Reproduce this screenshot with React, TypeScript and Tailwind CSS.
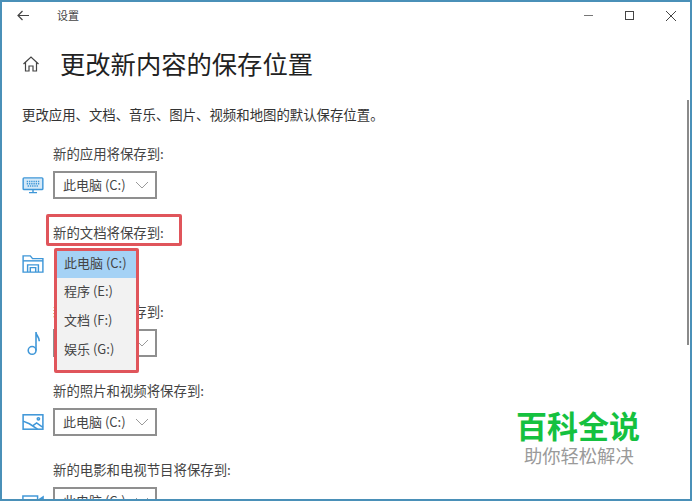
const font = { fontFamily: '"Noto Sans CJK SC", sans-serif' };

function Chevron() {
  return (
    <svg width="14" height="8" viewBox="0 0 14 8" fill="none" stroke="#9a9a9a" strokeWidth="1">
      <path d="M1 1l6 6 6-6" />
    </svg>
  );
}

function Select({ hidden }: { hidden?: boolean }) {
  if (hidden) return <div className="h-[28px] w-[104px]" />;
  return (
    <div className="flex h-[28px] w-[104px] items-center border-2 border-[#8f8f8f] bg-white pl-[8px] text-[13px] text-[#444]">
      <span className="w-[72px] whitespace-nowrap">此电脑 (C:)</span>
      <Chevron />
    </div>
  );
}

function Row({ label, icon, hidden }: { label: string; icon: React.ReactNode; hidden?: boolean }) {
  return (
    <div className="h-[79px]">
      <div className="ml-[51px] h-[26px] whitespace-nowrap text-[13.4px] leading-[24px] text-[#444]">{label}</div>
      <div className="mt-[4px] flex items-center">
        <div className="flex w-[51px] justify-center pl-[11px]">{icon}</div>
        <Select hidden={hidden} />
      </div>
    </div>
  );
}

const blue = '#3f97d8';

const Keyboard = (
  <svg width="22" height="17" viewBox="0 0 24 19" fill="none" stroke={blue} strokeWidth="1.6">
    <rect x="1" y="1" width="22" height="13" rx="1" fill="#d5e9f8" />
    <path d="M5 5h14M5 7.500h14M6 10h12" strokeDasharray="1.500 1" />
    <path d="M12 14v3.500M7.500 17.500h9" />
  </svg>
);
const Folder = (
  <svg width="22" height="18" viewBox="0 0 24 20" fill="none" stroke={blue} strokeWidth="1.6">
    <path d="M1 19V1h8l2.500 3H23v15z" />
    <path d="M1 6.500h22" />
    <path d="M6 19v-8h12v8M9 19v-5h6v5" />
  </svg>
);
const Note = (
  <svg width="13" height="25" viewBox="0 0 14 27" fill="none" stroke={blue} strokeWidth="1.7">
    <circle cx="5.500" cy="21" r="4.200" />
    <path d="M9.700 21V1c0 4 3.500 5 3.500 10" />
  </svg>
);
const Picture = (
  <svg width="22" height="18" viewBox="0 0 24 20" fill="none" stroke={blue} strokeWidth="1.700">
    <rect x="1" y="2" width="22" height="16" />
    <path d="M1 9l7 3 9 6M12 14l4-3 7 5" />
    <circle cx="18" cy="6.500" r="1.300" />
  </svg>
);
const Video = (
  <svg width="22" height="15" viewBox="0 0 24 16" fill="none" stroke={blue} strokeWidth="1.600">
    <rect x="1" y="2" width="16" height="12" />
    <path d="M17 7l6-4v10l-6-4" />
  </svg>
);

export default function App() {
  return (
    <div style={font} className="relative h-[501px] w-[692px] overflow-hidden border-2 border-[#4a90b8] bg-white">
      <div className="flex h-[27px] items-center pr-[12px] pl-[15px] text-[11px] text-[#444]">
        <svg width="12" height="11" viewBox="0 0 12 11" fill="none" stroke="#444" strokeWidth="1.2">
          <path d="M12 5.500H1M5.500 1L1 5.500 5.500 10" />
        </svg>
        <span className="ml-[28px]">设置</span>
        <div className="ml-auto flex items-center gap-[32px] pr-[2px]">
          <div className="h-[1.500px] w-[9px] bg-[#777]" />
          <div className="h-[9px] w-[9px] border border-[#444]" />
          <svg width="10" height="10" viewBox="0 0 10 10" stroke="#444" strokeWidth="1">
            <path d="M0 0l10 10M10 0L0 10" />
          </svg>
        </div>
      </div>
      <div className="mt-[14px] flex h-[42px] items-center pl-[20px]">
        <svg width="18" height="18" viewBox="0 0 18 18" fill="none" stroke="#444" strokeWidth="1.200">
          <path d="M1.500 9L9 2l7.500 7M3.500 7.500V16h3.500v-5h4v5h3.500V7.500" />
        </svg>
        <h1 className="ml-[20px] text-[25.3px] leading-none font-normal whitespace-nowrap text-[#222]">更改新内容的保存位置</h1>
      </div>
      <p className="mt-[16px] ml-[20px] text-[13.4px] leading-[26px] whitespace-nowrap text-[#333]">更改应用、文档、音乐、图片、视频和地图的默认保存位置。</p>
      <div className="mt-[14px]">
        <Row label="新的应用将保存到:" icon={Keyboard} />
        <Row label="新的文档将保存到:" icon={Folder} hidden />
        <Row label="新的音乐将保存到:" icon={Note} />
        <Row label="新的照片和视频将保存到:" icon={Picture} />
        <Row label="新的电影和电视节目将保存到:" icon={Video} />
      </div>

      <div className="absolute top-[212px] left-[44px] h-[32px] w-[136px] rounded-[2px] border-[3px] border-[#e0555b]" />
      <div className="absolute top-[246px] left-[52px] w-[85px] rounded-[2px] border-[3px] border-[#e0555b] bg-[#f2f2f2] text-[13px] text-[#444]">
        <div className="flex h-[27px] items-center bg-[#a5d2f5] pb-[4px] pl-[7px] whitespace-nowrap">此电脑 (C:)</div>
        <div className="flex h-[29px] items-center pb-[4px] pl-[7px] whitespace-nowrap">程序 (E:)</div>
        <div className="flex h-[29px] items-center pb-[4px] pl-[7px] whitespace-nowrap">文档 (F:)</div>
        <div className="flex h-[29px] items-center pb-[4px] pl-[7px] whitespace-nowrap">娱乐 (G:)</div>
        <div className="h-[5px]" />
      </div>

      <div className="absolute top-[98px] right-[1px] h-[245px] w-[2px] bg-[#8a8a8a]" />

      <div className="absolute top-[404px] left-[510px] h-[69px] w-[160px] bg-white">
        <div className="ml-[4px] text-[31px] leading-[38px] font-bold whitespace-nowrap text-[#15c13f]">百科全说</div>
        <div className="ml-[12px] text-[18.3px] leading-[22px] whitespace-nowrap text-[#9a9a9a]">助你轻松解决</div>
      </div>
    </div>
  );
}
